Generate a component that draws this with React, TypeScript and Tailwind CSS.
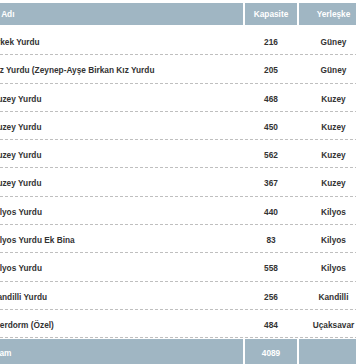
import React from "react";

const rows: { name: string; cap: string; campus: string; off: string }[] = [
  { name: "Erkek Yurdu", cap: "216", campus: "Güney", off: "-ml-[8.6px]" },
  { name: "Kız Yurdu (Zeynep-Ayşe Birkan Kız Yurdu", cap: "205", campus: "Güney", off: "-ml-[8.6px]" },
  { name: "Kuzey Yurdu", cap: "468", campus: "Kuzey", off: "-ml-[8.6px]" },
  { name: "Kuzey Yurdu", cap: "450", campus: "Kuzey", off: "-ml-[8.6px]" },
  { name: "Kuzey Yurdu", cap: "562", campus: "Kuzey", off: "-ml-[8.6px]" },
  { name: "Kuzey Yurdu", cap: "367", campus: "Kuzey", off: "-ml-[8.6px]" },
  { name: "Kilyos Yurdu", cap: "440", campus: "Kilyos", off: "-ml-[8.6px]" },
  { name: "Kilyos Yurdu Ek Bina", cap: "83", campus: "Kilyos", off: "-ml-[8.6px]" },
  { name: "Kilyos Yurdu", cap: "558", campus: "Kilyos", off: "-ml-[8.6px]" },
  { name: "Kandilli Yurdu", cap: "256", campus: "Kandilli", off: "-ml-[8.6px]" },
  { name: "Superdorm (Özel)", cap: "484", campus: "Uçaksavar", off: "-ml-[15.8px]" },
];

export default function App() {
  return (
    <div
      className="w-[356px] h-[364px] overflow-hidden bg-white font-bold text-[8.3px] leading-none"
      style={{ fontFamily: '"Liberation Sans", Arial, Helvetica, sans-serif' }}
    >
      <div className="w-[368px] pt-[3px]">
        {/* header */}
        <div className="grid grid-cols-[243px_52px_69px] gap-x-[2px] h-[22px] text-white">
          <div className="bg-[#a0b6c3] flex items-center overflow-visible whitespace-nowrap">
            <span className="-ml-[17px]">Yurt Adı</span>
          </div>
          <div className="bg-[#a0b6c3] flex items-center justify-center">Kapasite</div>
          <div className="bg-[#a0b6c3] flex items-center justify-center">Yerleşke</div>
        </div>
        <div className="mt-[2px]">
          {rows.map((r, i) => (
            <div
              key={i}
              className="grid grid-cols-[243px_52px_69px] gap-x-[2px] h-[28.3px] border-b border-dashed border-[#bfbfbf] text-[#333333] pt-[3px]"
            >
              <div className="flex items-center whitespace-nowrap">
                <span className={r.off}>{r.name}</span>
              </div>
              <div className="flex items-center justify-center">{r.cap}</div>
              <div className="flex items-center justify-center">{r.campus}</div>
            </div>
          ))}
        </div>
        {/* footer */}
        <div className="grid grid-cols-[243px_52px_69px] gap-x-[2px] h-[27px] mt-[1px] text-white">
          <div className="bg-[#a0b6c3] flex items-center whitespace-nowrap">
            <span className="-ml-[17.5px]">Toplam</span>
          </div>
          <div className="bg-[#a0b6c3] flex items-center justify-center">4089</div>
          <div className="bg-[#a0b6c3]"></div>
        </div>
      </div>
    </div>
  );
}
